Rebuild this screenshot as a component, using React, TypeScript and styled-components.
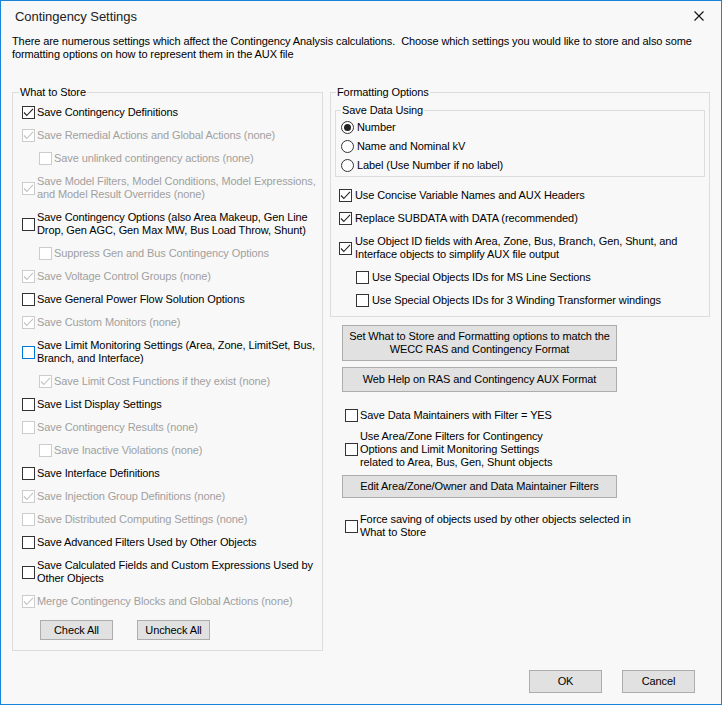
import { FC, Fragment } from "react";
import styled, { createGlobalStyle } from "styled-components";

const FONT = `"Liberation Sans", Arial, sans-serif`;

const GlobalStyle = createGlobalStyle`
  html, body {
    margin: 0;
    padding: 0;
    background: #f8f8f8;
  }
  body {
    font-family: ${FONT};
  }
`;

const Window = styled.div`
  box-sizing: border-box;
  width: 722px;
  height: 705px;
  border: 1px solid #1883d7;
  background: #f8f8f8;
  display: flex;
  flex-direction: column;
  font-family: ${FONT};
  font-size: 11px;
  letter-spacing: -0.1px;
  color: #000;
`;

const TitleBar = styled.div`
  height: 30px;
  display: flex;
  align-items: center;
  justify-content: space-between;
  padding: 0 17px 0 14px;
`;

const Title = styled.div`
  font-size: 13px;
  letter-spacing: -0.05px;
  color: #222;
`;

const Intro = styled.div`
  margin-top: 4px;
  padding: 0 11px;
  line-height: 13px;
  white-space: nowrap;
`;

const Main = styled.div`
  margin-top: 25px;
  padding: 0 11px;
  display: flex;
  align-items: flex-start;
  gap: 7px;
`;

const Group = styled.fieldset<{ $width: number }>`
  box-sizing: border-box;
  width: ${(p) => p.$width}px;
  min-width: 0;
  margin: 0;
  padding: 0;
  border: 1px solid #dcdcdc;
`;

const Legend = styled.legend<{ $offset: number }>`
  margin-left: ${(p) => p.$offset}px;
  padding: 0 1px;
  line-height: 13px;
  font-size: 11px;
`;

const GroupBody = styled.div<{ $pad: string; $gap?: number }>`
  padding: ${(p) => p.$pad};
  display: flex;
  flex-direction: column;
  gap: ${(p) => p.$gap ?? 10}px;
`;

const List = styled.div<{ $pad?: string }>`
  display: flex;
  flex-direction: column;
  gap: 10px;
  padding: ${(p) => p.$pad ?? "0"};
`;

const RightColumn = styled.div`
  width: 380px;
  display: flex;
  flex-direction: column;
`;

const Lower = styled.div`
  margin-top: 8px;
  padding-left: 12px;
  display: flex;
  flex-direction: column;
  align-items: flex-start;
`;

const Row = styled.label<{ $indent?: boolean; $disabled?: boolean; $gap?: number; $mt?: number; $ml?: number }>`
  display: flex;
  align-items: center;
  gap: ${(p) => p.$gap ?? 2}px;
  margin-top: ${(p) => p.$mt ?? 0}px;
  margin-left: ${(p) => (p.$indent ? 17 : 0) + (p.$ml ?? 0)}px;
  line-height: 13px;
  white-space: nowrap;
  color: ${(p) => (p.$disabled ? "#a0a0a0" : "#000")};
`;

const Box = styled.span<{ $disabled?: boolean; $focus?: boolean }>`
  box-sizing: border-box;
  flex: none;
  width: 13px;
  height: 13px;
  border: 1px solid
    ${(p) => (p.$focus ? "#0078d7" : p.$disabled ? "#cccccc" : "#333333")};
  background: #fff;
  display: flex;
  align-items: center;
  justify-content: center;
`;

const RadioCircle = styled.span`
  box-sizing: border-box;
  flex: none;
  width: 13px;
  height: 13px;
  border: 1px solid #333;
  border-radius: 50%;
  background: #fff;
  display: flex;
  align-items: center;
  justify-content: center;
`;

const RadioDot = styled.span`
  width: 7px;
  height: 7px;
  border-radius: 50%;
  background: #222;
`;

const Button = styled.button<{ $width: number; $height: number; $mt?: number }>`
  box-sizing: border-box;
  width: ${(p) => p.$width}px;
  height: ${(p) => p.$height}px;
  margin-top: ${(p) => p.$mt ?? 0}px;
  padding: 0;
  border: 1px solid #adadad;
  background: #e1e1e1;
  font-family: ${FONT};
  font-size: 11px;
  letter-spacing: -0.1px;
  line-height: 13px;
  color: #000;
  text-align: center;
  white-space: nowrap;
`;

const ButtonRow = styled.div<{ $gap: number }>`
  display: flex;
  gap: ${(p) => p.$gap}px;
  margin: 2px 0 0 18px;
`;

const Footer = styled.div`
  margin-top: auto;
  padding: 0 26px 11px 0;
  display: flex;
  justify-content: flex-end;
  gap: 20px;
`;

interface ICheck {
  lines: string[];
  checked?: boolean;
  disabled?: boolean;
  indent?: boolean;
  focus?: boolean;
}

const WHAT_TO_STORE: ICheck[] = [
  { lines: ["Save Contingency Definitions"], checked: true },
  { lines: ["Save Remedial Actions and Global Actions (none)"], checked: true, disabled: true },
  { lines: ["Save unlinked contingency actions (none)"], disabled: true, indent: true },
  {
    lines: ["Save Model Filters, Model Conditions, Model Expressions,", "and Model Result Overrides (none)"],
    checked: true,
    disabled: true,
  },
  { lines: ["Save Contingency Options (also Area Makeup, Gen Line", "Drop, Gen AGC, Gen Max MW, Bus Load Throw, Shunt)"] },
  { lines: ["Suppress Gen and Bus Contingency Options"], disabled: true, indent: true },
  { lines: ["Save Voltage Control Groups (none)"], checked: true, disabled: true },
  { lines: ["Save General Power Flow Solution Options"] },
  { lines: ["Save Custom Monitors (none)"], checked: true, disabled: true },
  { lines: ["Save Limit Monitoring Settings (Area, Zone, LimitSet, Bus,", "Branch, and Interface)"], focus: true },
  { lines: ["Save Limit Cost Functions if they exist (none)"], checked: true, disabled: true, indent: true },
  { lines: ["Save List Display Settings"] },
  { lines: ["Save Contingency Results (none)"], disabled: true },
  { lines: ["Save Inactive Violations (none)"], disabled: true, indent: true },
  { lines: ["Save Interface Definitions"] },
  { lines: ["Save Injection Group Definitions (none)"], checked: true, disabled: true },
  { lines: ["Save Distributed Computing Settings (none)"], disabled: true },
  { lines: ["Save Advanced Filters Used by Other Objects"] },
  { lines: ["Save Calculated Fields and Custom Expressions Used by", "Other Objects"] },
  { lines: ["Merge Contingency Blocks and Global Actions (none)"], checked: true, disabled: true },
];

const FORMATTING: ICheck[] = [
  { lines: ["Use Concise Variable Names and AUX Headers"], checked: true },
  { lines: ["Replace SUBDATA with DATA (recommended)"], checked: true },
  {
    lines: ["Use Object ID fields with Area, Zone, Bus, Branch, Gen, Shunt, and", "Interface objects to simplify AUX file output"],
    checked: true,
  },
  { lines: ["Use Special Objects IDs for MS Line Sections"], indent: true },
  { lines: ["Use Special Objects IDs for 3 Winding Transformer windings"], indent: true },
];

const RADIOS = ["Number", "Name and Nominal kV", "Label (Use Number if no label)"];

const Lines: FC<{ lines: string[] }> = ({ lines }) => (
  <span>
    {lines.map((line, i) => (
      <Fragment key={line}>
        {i > 0 && <br />}
        {line}
      </Fragment>
    ))}
  </span>
);

const CheckBox: FC<{ item: ICheck; gap?: number; mt?: number; ml?: number }> = ({ item, gap, mt, ml }) => (
  <Row $indent={item.indent} $disabled={item.disabled} $gap={gap} $mt={mt} $ml={ml}>
    <Box $disabled={item.disabled} $focus={item.focus}>
      {item.checked && (
        <svg width="11" height="11" viewBox="0 0 11 11">
          <polyline
            points="1,5.5 3.8,8.5 10,1.8"
            fill="none"
            stroke={item.disabled ? "#c2c2c2" : "#222"}
            strokeWidth="1.1"
          />
        </svg>
      )}
    </Box>
    <Lines lines={item.lines} />
  </Row>
);

const CloseIcon: FC = () => (
  <svg width="10" height="10" viewBox="0 0 10 10">
    <path d="M0.5 0.5 L9.5 9.5 M9.5 0.5 L0.5 9.5" stroke="#111" strokeWidth="1.1" fill="none" />
  </svg>
);

const App: FC = () => {
  return (
    <>
      <GlobalStyle />
      <Window>
        <TitleBar>
          <Title>Contingency Settings</Title>
          <CloseIcon />
        </TitleBar>

        <Intro>
          There are numerous settings which affect the Contingency Analysis calculations.&nbsp; Choose which settings you
          would like to store and also some
          <br />
          formatting options on how to represent them in the AUX file
        </Intro>

        <Main>
          {/* what to store */}
          <Group $width={314}>
            <Legend $offset={6}>What to Store</Legend>
            <GroupBody $pad="7px 0 10px 9px">
              {WHAT_TO_STORE.map((item) => (
                <CheckBox item={item} key={item.lines[0]} />
              ))}
              <ButtonRow $gap={24}>
                <Button $width={73} $height={20}>
                  Check All
                </Button>
                <Button $width={73} $height={20}>
                  Uncheck All
                </Button>
              </ButtonRow>
            </GroupBody>
          </Group>

          <RightColumn>
            {/* formatting options */}
            <Group $width={380}>
              <Legend $offset={5}>Formatting Options</Legend>
              <GroupBody $pad="5px 4px 9px 4px" $gap={0}>
                <Group $width={370}>
                  <Legend $offset={5}>Save Data Using</Legend>
                  <GroupBody $pad="4px 0 4px 5px" $gap={6}>
                    {RADIOS.map((label, i) => (
                      <Row key={label} $gap={3}>
                        <RadioCircle>{i === 0 && <RadioDot />}</RadioCircle>
                        {label}
                      </Row>
                    ))}
                  </GroupBody>
                </Group>
                <List $pad="12px 0 0 4px">
                  {FORMATTING.map((item) => (
                    <CheckBox item={item} key={item.lines[0]} gap={3} />
                  ))}
                </List>
              </GroupBody>
            </Group>

            <Lower>
              <Button $width={275} $height={36}>
                Set What to Store and Formatting options to match the
                <br />
                WECC RAS and Contingency Format
              </Button>
              <Button $width={275} $height={25} $mt={6}>
                Web Help on RAS and Contingency AUX Format
              </Button>
              <CheckBox item={{ lines: ["Save Data Maintainers with Filter = YES"] }} mt={17} ml={3} />
              <CheckBox
                item={{
                  lines: [
                    "Use Area/Zone Filters for Contingency",
                    "Options and Limit Monitoring Settings",
                    "related to Area, Bus, Gen, Shunt objects",
                  ],
                }}
                mt={8}
                ml={3}
              />
              <Button $width={275} $height={23} $mt={6}>
                Edit Area/Zone/Owner and Data Maintainer Filters
              </Button>
              <CheckBox
                item={{ lines: ["Force saving of objects used by other objects selected in", "What to Store"] }}
                mt={15}
                ml={3}
              />
            </Lower>
          </RightColumn>
        </Main>

        <Footer>
          <Button $width={73} $height={23}>
            OK
          </Button>
          <Button $width={73} $height={23}>
            Cancel
          </Button>
        </Footer>
      </Window>
    </>
  );
};

export default App;
